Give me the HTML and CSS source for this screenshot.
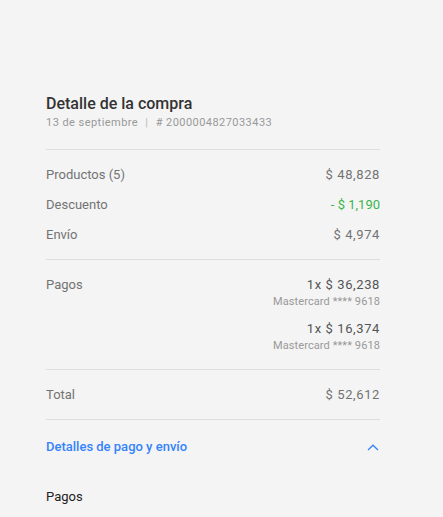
FILE: index.html
```html
<!DOCTYPE html>
<html lang="es">
<head>
<meta charset="utf-8">
<link rel="stylesheet" href="styles.css">
</head>
<body>
<main class="detail">
  <header class="head">
    <h1 class="title">Detalle de la compra</h1>
    <p class="sub">13 de septiembre <span class="sep">|</span> # 2000004827033433</p>
  </header>
  <section class="block">
    <div class="row"><span>Productos (5)</span><span class="val">$ 48,828</span></div>
    <div class="row"><span>Descuento</span><span class="green">- $ 1,190</span></div>
    <div class="row"><span>Envío</span><span class="val">$ 4,974</span></div>
  </section>
  <section class="block pays">
    <div class="row top"><span>Pagos</span>
      <div class="paylist">
        <div class="pay"><span class="amt">1x $ 36,238</span><span class="card">Mastercard **** 9618</span></div>
        <div class="pay"><span class="amt">1x $ 16,374</span><span class="card">Mastercard **** 9618</span></div>
      </div>
    </div>
  </section>
  <section class="block">
    <div class="row"><span>Total</span><span class="val">$ 52,612</span></div>
  </section>
  <section class="more">
    <div class="toggle"><span>Detalles de pago y envío</span>
      <svg class="chev" width="12" height="7" viewBox="0 0 12 7"><path d="M1 6 L6 1.2 L11 6" fill="none" stroke="#3483fa" stroke-width="1.3"/></svg>
    </div>
    <h2 class="subhead">Pagos</h2>
  </section>
</main>
</body>
</html>
```
FILE: styles.css
```css
html, body { margin: 0; padding: 0; }
body {
  background: #f4f4f4;
  font-family: "Roboto", "Lato", sans-serif;
  color: #737373;
  width: 443px;
  height: 517px;
  overflow: hidden;
}
.detail {
  margin-left: 46px;
  width: 334px;
  padding-top: 94px;
}
.head { padding-bottom: 18px; border-bottom: 1px solid #dedede; }
.title {
  margin: 0;
  font-size: 16px;
  line-height: 20px;
  font-weight: 500;
  color: #333;
}
.sub {
  margin: 1px 0 0;
  font-size: 11px;
  line-height: 16px;
  color: #999;
  letter-spacing: 0.45px;
}
.sep { margin: 0 4px; color: #bbb; }
.block {
  padding: 15px 0 14px;
  border-bottom: 1px solid #dedede;
  display: flex;
  flex-direction: column;
  gap: 10px;
}
.pays { padding-bottom: 16px; }
.row {
  display: flex;
  justify-content: space-between;
  font-size: 13px;
  line-height: 20px;
}
.row.top { align-items: flex-start; }
.val { letter-spacing: 0.6px; }
.green { color: #39b54a; }
.paylist { display: flex; flex-direction: column; gap: 10px; align-items: flex-end; }
.pay { display: flex; flex-direction: column; align-items: flex-end; }
.amt { font-size: 13px; line-height: 20px; color: #555; font-weight: 400; letter-spacing: 0.6px; }
.card { font-size: 11px; line-height: 14px; color: #999; letter-spacing: 0.1px; }
.more { padding-top: 17px; }
.toggle {
  display: flex;
  justify-content: space-between;
  align-items: center;
  font-size: 13px;
  line-height: 20px;
  color: #3483fa;
  font-weight: 500;
}
.chev { margin-right: 1px; }
.subhead {
  margin: 30px 0 0;
  font-size: 13px;
  line-height: 20px;
  font-weight: 400;
  color: #222;
}
```
